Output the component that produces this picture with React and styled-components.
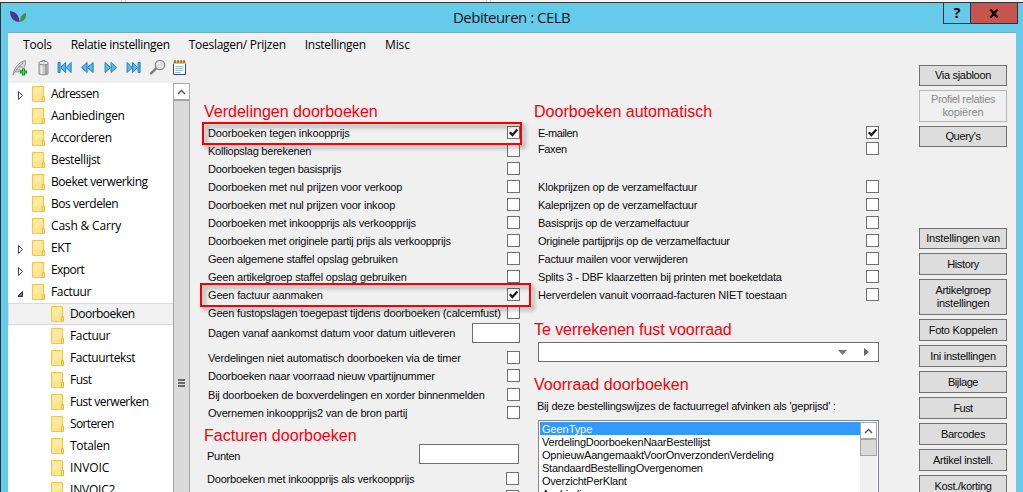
import React, { useLayoutEffect, useRef, useState } from "react";
import styled, { createGlobalStyle } from "styled-components";

const Global = createGlobalStyle`
  * { box-sizing: border-box; }
  html, body { margin: 0; padding: 0; overflow: hidden; background: #f0f0f0; }
  body { font-family: "Liberation Sans", Arial, sans-serif; font-size: 11px; color: #000; }
`;

const FitSpan = styled.span`
  display: inline-block;
  white-space: pre;
`;

/* Spreads the letters so that the label occupies its design width. */
function Fit({ w, children }) {
  const ref = useRef(null);
  const [spacing, setSpacing] = useState(0);
  useLayoutEffect(() => {
    const natural = ref.current.getBoundingClientRect().width;
    setSpacing((w + 0.2 - natural) / children.length);
  }, [w, children]);
  return (
    <FitSpan ref={ref} style={{ letterSpacing: `${spacing}px` }}>
      {children}
    </FitSpan>
  );
}

const Screen = styled.div`
  width: 1023px;
  height: 492px;
  overflow: hidden;
  display: flex;
  flex-direction: column;
  background: #f1f1f1;
`;
const Behind = styled.div`
  height: 2px;
  flex: none;
  display: flex;
  gap: 360px;
  padding-left: 121px;
  background: #f5f5f5;
`;
const Seam = styled.i`
  width: 5px;
  border: solid #d4d4d4;
  border-width: 0 1px;
`;
const Window = styled.div`
  flex: 1;
  min-height: 0;
  display: flex;
  flex-direction: column;
  background: #66caea;
  border-top: 1px solid #2d3438;
  border-left: 1px solid #2d3438;
`;
const TitleBar = styled.header`
  height: 29px;
  flex: none;
  display: flex;
  align-items: flex-start;
  padding: 0 5px 0 8px;
`;
const Logo = styled.svg`
  width: 18px;
  height: 14px;
  margin-top: 7px;
`;
const Title = styled.h1`
  flex: 1;
  margin: 0;
  padding-left: 426px;
  font: 400 15px/29px "Open Sans", "Noto Sans", sans-serif;
  color: #0c1a20;
`;
const CaptionButton = styled.button`
  height: 21px;
  width: ${(p) => (p.$close ? 47 : 28)}px;
  margin: 0;
  padding: 0;
  border: 1px solid #23343b;
  border-top: 0;
  border-left-width: ${(p) => (p.$close ? 0 : 1)}px;
  background: ${(p) => (p.$close ? "#c4564e" : "#66caea")};
  font: 700 14px/20px "Open Sans", sans-serif;
  color: #000;
`;
const Client = styled.div`
  flex: 1;
  min-height: 0;
  margin: 0 7px 0 7px;
  border-top: 1px solid #7fa9b9;
  background: #f0f0f0;
  display: flex;
  flex-direction: column;
`;
const MenuBar = styled.nav`
  height: 23px;
  flex: none;
  display: flex;
  gap: 19px;
  padding-left: 15px;
  font: 12px/23px "Open Sans", "Noto Sans", sans-serif;
`;
const Below = styled.div`
  flex: 1;
  min-height: 0;
  display: flex;
`;
const Main = styled.div`
  width: 911px;
  flex: none;
  display: flex;
  flex-direction: column;
`;
const Toolbar = styled.div`
  height: 27px;
  flex: none;
  padding: 3px 0 0 3px;
  display: flex;
  gap: 5px;
`;
const ToolIcon = styled.svg`
  width: 18px;
  height: 18px;
  flex: none;
`;
const Panes = styled.div`
  flex: 1;
  min-height: 0;
  display: flex;
`;
const Tree = styled.div`
  width: 165px;
  flex: none;
  background: #fff;
  overflow: hidden;
`;
const TreeRow = styled.div`
  height: 22px;
  display: flex;
  padding-left: ${(p) => (p.$child ? 29 : 10)}px;
  font: 12px/21px "Open Sans", "Noto Sans", sans-serif;
  background: ${(p) => (p.$selected ? "#f1f1f1" : "transparent")};
  box-shadow: ${(p) => (p.$selected ? "inset 1px 1px #dadada, inset 0 -1px #dadada" : "none")};
`;
const Arrow = styled.svg`
  width: 14px;
  height: 22px;
  flex: none;
`;
const Folder = styled.svg`
  width: 13px;
  height: 17px;
  margin: 3px 6px 0 0;
  flex: none;
`;
const Scroll = styled.div`
  width: ${(p) => p.$w}px;
  flex: none;
  display: flex;
  flex-direction: column;
  background: ${(p) => (p.$full ? "#dadada" : "#f0f0f0")};
`;
const ScrollUp = styled.div`
  height: 17px;
  flex: none;
  background: #fdfdfd;
  border: 1px solid #a8a8a8;
  display: flex;
  align-items: center;
  justify-content: center;
`;
const Thumb = styled.div`
  flex: ${(p) => (p.$h ? "none" : 1)};
  height: ${(p) => (p.$h ? p.$h + "px" : "auto")};
  background: #dadada;
  border: 1px solid #a3a3a3;
  border-bottom-width: ${(p) => (p.$h ? 1 : 0)}px;
`;
const Grip = styled.div`
  width: 7px;
  height: 8px;
  margin: 278px 0 0 4px;
  background: repeating-linear-gradient(#6b6b6b 0 2px, #dadada 2px 3px);
`;
const Column = styled.section`
  position: relative;
  width: ${(p) => p.$w}px;
  flex: none;
  padding: 19px 0 0 ${(p) => p.$pad}px;
`;
const Heading = styled.h2`
  height: 18px;
  margin: ${(p) => p.$top || 0}px 0 ${(p) => p.$bottom ?? 4}px;
  font: 400 16px/20px "Liberation Sans", Arial, sans-serif;
  color: #f5000a;
`;
const Field = styled.div`
  height: ${(p) => p.$h || 18}px;
  width: ${(p) => p.$w}px;
  margin: ${(p) => p.$top || 0}px 0 0 ${(p) => p.$left ?? 4}px;
  display: flex;
  justify-content: space-between;
  align-items: flex-start;
  line-height: 18px;
`;
const Caption = styled.label`
  padding-top: ${(p) => p.$drop || 0}px;
  white-space: nowrap;
  color: #0a0a0a;
`;
const Box = styled.span`
  width: 13px;
  height: 13px;
  margin-top: 2px;
  flex: none;
  display: flex;
  background: #fff;
  border: 1px solid #707070;
`;
const Input = styled.input`
  width: ${(p) => p.$w}px;
  height: 20px;
  padding: 0 3px;
  border: 1px solid #707070;
  border-radius: 0;
  background: #fff;
`;
const Combo = styled.div`
  width: 341px;
  height: 20px;
  margin-left: 4px;
  padding-right: 9px;
  display: flex;
  align-items: center;
  justify-content: flex-end;
  gap: 17px;
  border: 1px solid #707070;
  background: #fff;
`;
const ListBox = styled.div`
  width: 341px;
  height: 90px;
  margin: 5px 0 0 4px;
  padding: 1px;
  display: flex;
  border: 1px solid #828790;
  background: #fff;
`;
const Items = styled.div`
  flex: 1;
`;
const Item = styled.div`
  height: 13px;
  padding-left: 2px;
  line-height: 14px;
  color: ${(p) => (p.$selected ? "#fff" : "#0a0a0a")};
  background: ${(p) => (p.$selected ? "#3399ff" : "transparent")};
`;
const Mark = styled.div`
  position: absolute;
  left: ${(p) => p.$x}px;
  top: ${(p) => p.$y}px;
  width: ${(p) => p.$w}px;
  height: ${(p) => p.$h}px;
  border: 2px solid #f40000;
  filter: drop-shadow(3px 3px 2px rgba(0, 0, 0, 0.42));
`;
const Actions = styled.aside`
  width: 88px;
  flex: none;
  padding-top: 9px;
  display: flex;
  flex-direction: column;
  gap: 4px;
`;
const Action = styled.button`
  width: 88px;
  height: ${(p) => p.$h || 22}px;
  flex: none;
  margin: ${(p) => p.$top || 0}px 0 0;
  padding: 0;
  display: flex;
  flex-direction: column;
  align-items: center;
  justify-content: center;
  border: 1px solid ${(p) => (p.disabled ? "#b5b8ba" : "#707070")};
  background: ${(p) => (p.disabled ? "#f0f0f0" : "#dddddd")};
  color: ${(p) => (p.disabled ? "#8a8a8a" : "#0a0a0a")};
  font: 11px/13px "Liberation Sans", Arial, sans-serif;
`;

const roots = [
  ["Adressen", 47.5, "closed"],
  ["Aanbiedingen", 73.5],
  ["Accorderen", 60.5],
  ["Bestellijst", 49],
  ["Boeket verwerking", 96.5],
  ["Bos verdelen", 67],
  ["Cash & Carry", 70],
  ["EKT", 19.5, "closed"],
  ["Export", 33, "closed"],
  ["Factuur", 40, "open"],
];
const children = [
  ["Doorboeken", 64.5],
  ["Factuur", 40],
  ["Factuurtekst", 65],
  ["Fust", 21.5],
  ["Fust verwerken", 78.5],
  ["Sorteren", 43.5],
  ["Totalen", 39.5],
  ["INVOIC", 39],
  ["INVOIC2", 45],
];
const menus = [
  ["Tools", 28.5],
  ["Relatie instellingen", 98.8],
  ["Toeslagen/ Prijzen", 96.8],
  ["Instellingen", 61],
  ["Misc", 24.8],
];
const distribution = [
  ["Doorboeken tegen inkoopprijs", 141.5, true],
  ["Kolliopslag berekenen", 103],
  ["Doorboeken tegen basisprijs", 133],
  ["Doorboeken met nul prijzen voor verkoop", 194],
  ["Doorboeken met nul prijzen voor inkoop", 187],
  ["Doorboeken met inkoopprijs als verkoopprijs", 207.5],
  ["Doorboeken met originele partij prijs als verkoopprijs", 242.5],
  ["Geen algemene staffel opslag gebruiken", 189.5],
  ["Geen artikelgroep staffel opslag gebruiken", 198.5],
  ["Geen factuur aanmaken", 114.5, true],
  ["Geen fustopslagen toegepast tijdens doorboeken (calcemfust)", 292.5],
];
const automatic = [
  ["Klokprijzen op de verzamelfactuur", 159],
  ["Kaleprijzen op de verzamelfactuur", 159],
  ["Basisprijs op de verzamelfactuur", 151],
  ["Originele partijprijs op de verzamelfactuur", 191.5],
  ["Factuur mailen voor verwijderen", 149.5],
  ["Splits 3 - DBF klaarzetten bij printen met boeketdata", 243.5],
  ["Herverdelen vanuit voorraad-facturen NIET toestaan", 248.5],
];
const orderTypes = [
  ["GeenType", 50],
  ["VerdelingDoorboekenNaarBestellijst", 168],
  ["OpnieuwAangemaaktVoorOnverzondenVerdeling", 231.5],
  ["StandaardBestellingOvergenomen", 160.5],
  ["OverzichtPerKlant", 84.5],
  ["Aanbieding", 50],
];

function Check({ label, w, checked, width = 312, ...rest }) {
  return (
    <Field $w={width} {...rest}>
      <Caption><Fit w={w}>{label}</Fit></Caption>
      <Box>
        {checked && (
          <svg width="11" height="11" viewBox="0 0 11 11">
            <path d="M1.8 5.2 4.4 8.1 9.4 2.4" fill="none" stroke="#1c1c1c" strokeWidth="2.3" />
          </svg>
        )}
      </Box>
    </Field>
  );
}

function TreeItem({ label, w, state, child, selected }) {
  return (
    <TreeRow $child={child} $selected={selected}>
      <Arrow viewBox="0 0 14 22">
        {state === "closed" && <path d="M.5 8.5v8l4-4z" fill="#fff" stroke="#444" />}
        {state === "open" && <path d="M4.5 10.5v5h-5z" fill="#777" stroke="#333" />}
      </Arrow>
      <Folder viewBox="0 0 13 17">
        <path d="M.5.5h11v15H.5z" fill="#ffe48c" stroke="#edc850" />
        <path d="M2 2h8v4L2 11z" fill="#ffeaa3" />
        <path d="M10.5 10.5h2v5h-2z" fill="#ffe48c" stroke="#e6be3e" />
      </Folder>
      <Fit w={w}>{label}</Fit>
    </TreeRow>
  );
}

const Chevron = () => (
  <svg width="9" height="6" viewBox="0 0 9 6">
    <path d="M1 5 4.5 1.5 8 5" fill="none" stroke="#555" strokeWidth="1.4" />
  </svg>
);

function Seek({ shapes, bar }) {
  return (
    <ToolIcon viewBox="-0.6 0 18 18">
      <g fill="#5db9ee" stroke="#1c7cc4" strokeWidth="1">
        {shapes.map((d) => <path key={d} d={d} />)}
        {bar !== undefined && <path d={`M${bar} 3.5h2v10h-2z`} />}
      </g>
    </ToolIcon>
  );
}

function Tools() {
  return (
    <Toolbar>
      <ToolIcon viewBox="0 0 18 18">
        <path d="M2 16C3 9 8 3 14.500 1.500c.5 4-1 9-6 11-2 .8-3.500.5-4.500 0" fill="#d8dad8" stroke="#8f9491" />
        <path d="M2 16C5 11 8 7 12.500 3.500M5 10.500l4 .5M7 7.500l4.500.5" fill="none" stroke="#8b8f8d" strokeWidth=".9" />
        <path d="M12.500 9.500v7M9 13h7" stroke="#15892b" strokeWidth="3" />
        <path d="M12.500 10.300v5.400M9.800 13h5.400" stroke="#54d654" strokeWidth="1.200" />
      </ToolIcon>
      <ToolIcon viewBox="0 0 18 18">
        <path d="M5 5v10q4.500 1.800 9 0V5z" fill="#c9c9c9" stroke="#8c8c8c" />
        <path d="M7.500 6v9" stroke="#efefef" strokeWidth="2" />
        <path d="M12 6v9" stroke="#a2a2a2" strokeWidth="2" />
        <ellipse cx="9.500" cy="4" rx="4.800" ry="1.900" fill="#e2e2e2" stroke="#8c8c8c" />
        <path d="M8 2.500V1.500h3v1" fill="none" stroke="#8c8c8c" />
      </ToolIcon>
      <Seek bar={0.5} shapes={["M8 3.500v10L3 8.500z", "M13.500 3.500v10l-5-5z"]} />
      <Seek shapes={["M6.500 3.500v10l-5.500-5z", "M12.500 3.500v10l-5.500-5z"]} />
      <Seek shapes={["M1.500 3.500v10l5.500-5z", "M7.500 3.500v10l5.500-5z"]} />
      <Seek bar={11.5} shapes={["M.5 3.500v10l5-5z", "M6 3.500v10l5-5z"]} />
      <ToolIcon viewBox="-0.5 0 18 18">
        <path d="M1.500 14.500 6.500 9.500" stroke="#777" strokeWidth="2.400" strokeLinecap="round" />
        <circle cx="10.500" cy="6" r="4.700" fill="#e0e0e0" stroke="#8a8a8a" strokeWidth="1.300" />
        <path d="M7.800 6A2.800 2.800 0 0 1 10.500 3.200" fill="none" stroke="#fff" />
      </ToolIcon>
      <ToolIcon viewBox="0 0 18 18">
        <path d="M1.500 3.500h12v12h-12z" fill="#fff" stroke="#2d4f86" />
        <path d="M1 2h13v3H1z" fill="#f4c52c" />
        <path d="M3 1v3M6 1v3M9 1v3M12 1v3" stroke="#4c3c14" />
        <path d="M3.500 7.500h8M3.500 9.500h8M3.500 11.500h8M3.500 13.500h5" stroke="#8aa2c8" strokeWidth=".8" />
      </ToolIcon>
    </Toolbar>
  );
}

export default function App() {
  return (
    <Screen>
      <Global />
      <Behind><Seam /><Seam /></Behind>
      <Window>
        <TitleBar>
          <Logo viewBox="0 0 18 14">
            <path d="M1 1C7 2 10 5 10.500 12 5 12 1 8 1 1z" fill="#51308f" />
            <path d="M17 3c.5 5-2 8-6 9 0-5 2-8 6-9z" fill="#3f8f3c" />
          </Logo>
          <Title><Fit w={117}>Debiteuren : CELB</Fit></Title>
          <CaptionButton>?</CaptionButton>
          <CaptionButton $close>
            <svg width="10" height="9" viewBox="0 0 10 9">
              <path d="M1.500.5l7 8M8.500.5l-7 8" stroke="#000" strokeWidth="2.400" />
            </svg>
          </CaptionButton>
        </TitleBar>
        <Client>
          <MenuBar>
            {menus.map(([t, w]) => <Fit key={t} w={w}>{t}</Fit>)}
          </MenuBar>
          <Below>
            <Main>
              <Tools />
              <Panes>
                <Tree>
                  {roots.map(([t, w, s]) => <TreeItem key={t} label={t} w={w} state={s} />)}
                  {children.map(([t, w], i) => (
                    <TreeItem key={t} label={t} w={w} child selected={i === 0} />
                  ))}
                </Tree>
                <Scroll $w={17} $full>
                  <ScrollUp><Chevron /></ScrollUp>
                  <Thumb><Grip /></Thumb>
                </Scroll>
                <Column $w={344} $pad={14}>
                  <Heading><Fit w={173.5}>Verdelingen doorboeken</Fit></Heading>
                  {distribution.map(([t, w, c]) => <Check key={t} label={t} w={w} checked={c} />)}
                  <Field $w={312} $h={20} $top={1}>
                    <Caption $drop={1}><Fit w={247}>Dagen vanaf aankomst datum voor datum uitleveren</Fit></Caption>
                    <Input $w={48} />
                  </Field>
                  <Check $top={6} label="Verdelingen niet automatisch doorboeken via de timer" w={252.5} />
                  <Check label="Doorboeken naar voorraad nieuw vpartijnummer" w={226.5} />
                  <Check $top={1} label="Bij doorboeken de boxverdelingen en xorder binnenmelden" w={276.5} />
                  <Check label="Overnemen inkoopprijs2 van de bron partij" w={199} />
                  <Heading $top={4} $bottom={0}><Fit w={152.5}>Facturen doorboeken</Fit></Heading>
                  <Field $w={312} $h={20} $left={3}>
                    <Caption $drop={3}><Fit w={33}>Punten</Fit></Caption>
                    <Input $w={100} />
                  </Field>
                  <Check $left={3} $top={6} label="Doorboeken met inkoopprijs als verkoopprijs" w={207} />
                  <Check $left={3} label="" w={0} />
                  <Mark $x={12} $y={39} $w={320} $h={23} />
                  <Mark $x={10} $y={200} $w={331} $h={24} />
                </Column>
                <Column $w={385} $pad={0}>
                  <Heading><Fit w={178}>Doorboeken automatisch</Fit></Heading>
                  <Check width={341} $h={16} label="E-mailen" w={39.5} checked />
                  <Check width={341} label="Faxen" w={28.5} />
                  <Check width={341} $top={20} label={automatic[0][0]} w={automatic[0][1]} />
                  {automatic.slice(1).map(([t, w]) => <Check key={t} width={341} label={t} w={w} />)}
                  <Heading $top={16}><Fit w={197.5}>Te verrekenen fust voorraad</Fit></Heading>
                  <Combo>
                    <svg width="9" height="5" viewBox="0 0 9 5"><path d="M0 0h9L4.500 5z" fill="#777" /></svg>
                    <svg width="5" height="8" viewBox="0 0 5 8"><path d="M0 0v8l5-4z" fill="#666" /></svg>
                  </Combo>
                  <Heading $top={13}><Fit w={154.5}>Voorraad doorboeken</Fit></Heading>
                  <Field $w={341} $left={3}>
                    <Caption><Fit w={298.5}>Bij deze bestellingswijzes de factuurregel afvinken als 'geprijsd' :</Fit></Caption>
                  </Field>
                  <ListBox>
                    <Items>
                      {orderTypes.map(([t, w], i) => (
                        <Item key={t} $selected={i === 0}><Fit w={w}>{t}</Fit></Item>
                      ))}
                    </Items>
                    <Scroll $w={17}>
                      <ScrollUp><Chevron /></ScrollUp>
                      <Thumb $h={17} />
                    </Scroll>
                  </ListBox>
                </Column>
              </Panes>
            </Main>
            <Actions>
              <Action $h={21}><Fit w={56}>Via sjabloon</Fit></Action>
              <Action $h={32} disabled>
                <Fit w={64}>Profiel relaties</Fit>
                <Fit w={41}>kopiëren</Fit>
              </Action>
              <Action $h={21}><Fit w={35}>Query's</Fit></Action>
              <Action $h={21} $top={77}><Fit w={73.5}>Instellingen van</Fit></Action>
              <Action><Fit w={31.5}>History</Fit></Action>
              <Action $h={36}>
                <Fit w={55}>Artikelgroep</Fit>
                <Fit w={52.5}>instellingen</Fit>
              </Action>
              <Action><Fit w={68.5}>Foto Koppelen</Fit></Action>
              <Action><Fit w={65.5}>Ini instellingen</Fit></Action>
              <Action><Fit w={30}>Bijlage</Fit></Action>
              <Action><Fit w={19}>Fust</Fit></Action>
              <Action><Fit w={44}>Barcodes</Fit></Action>
              <Action><Fit w={60}>Artikel instell.</Fit></Action>
              <Action><Fit w={57}>Kost./korting</Fit></Action>
            </Actions>
          </Below>
        </Client>
      </Window>
    </Screen>
  );
}
